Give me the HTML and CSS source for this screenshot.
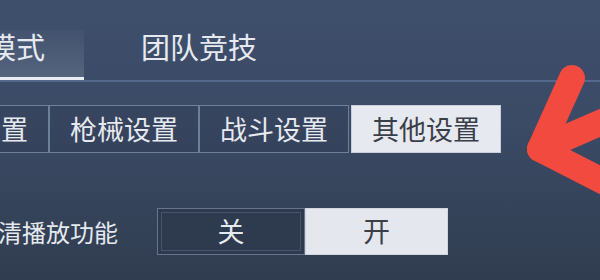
FILE: index.html
```html
<!DOCTYPE html>
<html lang="zh-CN">
<head>
    <meta charset="UTF-8">
    <title>其他设置</title>
    <link rel="stylesheet" href="styles.css">
</head>
<body>
    <div class="screen">
        <div class="mode-tabs">
            <div class="mode-tab active">经典模式</div>
            <div class="mode-tab">团队竞技</div>
        </div>

        <div class="settings-tabs">
            <div class="settings-tab">基础设置</div>
            <div class="settings-tab">枪械设置</div>
            <div class="settings-tab">战斗设置</div>
            <div class="settings-tab active">其他设置</div>
        </div>

        <div class="option-row">
            <div class="option-label">高清播放功能</div>
            <div class="switch">
                <div class="switch-item">关</div>
                <div class="switch-item on">开</div>
            </div>
        </div>

        <!-- red hand-drawn arrow pointing at the active tab -->
        <svg class="arrow" width="600" height="280" viewBox="0 0 600 280">
            <g fill="none" stroke="#f24a3e" stroke-width="26" stroke-linecap="round" stroke-linejoin="round">
                <polyline points="572,78 540,149 620,190"/>
                <line x1="540" y1="149" x2="625" y2="112"/>
            </g>
        </svg>
    </div>
</body>
</html>
```

FILE: styles.css
```css
body {
    margin: 0;
    font-family: "Noto Sans CJK SC", "Noto Sans", sans-serif;
    color: #e6eaf0;
}
.screen {
    position: relative;
    width: 600px;
    height: 280px;
    overflow: hidden;
    background: linear-gradient(180deg, #3e4f6c 0%, #3b4a65 45%, #303d50 100%);
}
.mode-tabs {
    display: flex;
    gap: 45px;
    margin-left: -188px;
    padding-top: 30px;
    border-bottom: 2px solid #55678a;
}
.mode-tab {
    width: 140px;
    height: 50px;
    font-size: 29px;
    line-height: 32px;
    text-align: center;
    white-space: nowrap;
    overflow: hidden;
}
.mode-tab:first-child {
    width: 272px;
}
.mode-tab.active {
    background: linear-gradient(180deg, rgba(80, 96, 124, 0.25) 0%, #56667f 100%);
    box-shadow: inset 0 -3px 0 #e9edf3;
    text-align: right;
    padding-right: 39px;
    box-sizing: border-box;
}
.settings-tabs {
    display: flex;
    margin: 23px 0 0 -101px;
}
.settings-tab {
    width: 150px;
    height: 48px;
    box-sizing: border-box;
    border: 1px solid #6e7f9a;
    background: rgba(40, 52, 74, 0.25);
    font-size: 27px;
    line-height: 46px;
    text-align: center;
}
.settings-tab.active {
    margin-left: 2px;
    background: #e6e9f0;
    border-color: #c9ceda;
    color: #3a3e48;
}
.option-row {
    display: flex;
    align-items: center;
    margin: 55px 0 0 -26px;
}
.option-label {
    width: 144px;
    font-size: 24px;
    white-space: nowrap;
}
.switch {
    display: flex;
    margin-left: 39px;
}
.switch-item {
    width: 148px;
    height: 47px;
    box-sizing: border-box;
    border: 1px solid #66758c;
    background: #2e3a4d;
    box-shadow: inset 0 0 0 3px #2e3a4d, inset 0 0 0 4px #46556b;
    font-size: 27px;
    line-height: 44px;
    text-align: center;
}
.switch-item.on {
    width: 143px;
    background: #e4e7ee;
    border-color: #d0d5de;
    box-shadow: none;
    color: #3c3f47;
}
.arrow {
    position: absolute;
    left: 0;
    top: 0;
}
```
